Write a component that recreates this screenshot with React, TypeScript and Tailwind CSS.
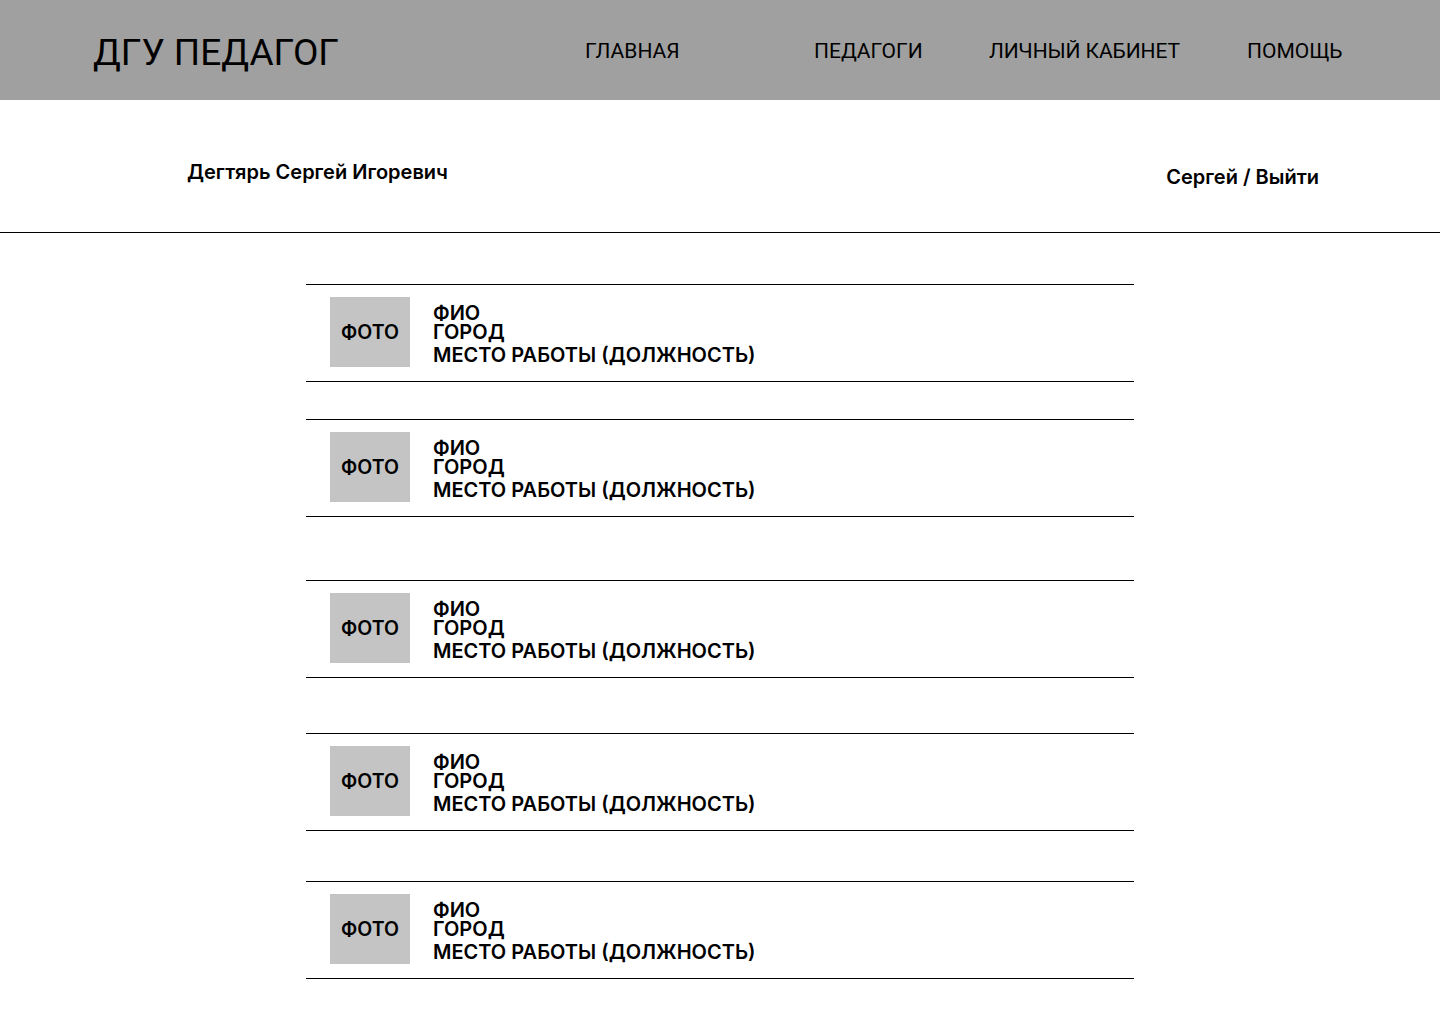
import React from "react";

const cards = [
  { mt: "mt-[51px]" },
  { mt: "mt-[37px]" },
  { mt: "mt-[63px]" },
  { mt: "mt-[55px]" },
  { mt: "mt-[50px]" },
];

export default function App() {
  return (
    <div className="min-h-[1024px] w-[1440px] bg-white text-black">
      <header className="flex h-[100px] items-center bg-[#a0a0a0]">
        <div className="ml-[93px] mt-[5px] w-[492px] font-['Roboto'] text-[37px] leading-none">ДГУ ПЕДАГОГ</div>
        <nav className="mt-[2px] flex items-center font-['Roboto'] text-[21px] leading-none">
          <span className="w-[229px]">ГЛАВНАЯ</span>
          <span className="w-[175px]">ПЕДАГОГИ</span>
          <span className="w-[258px] tracking-[-0.1px]">ЛИЧНЫЙ КАБИНЕТ</span>
          <span>ПОМОЩЬ</span>
        </nav>
      </header>
      <section className="flex h-[133px] items-start justify-between border-b border-black font-['Inter'] font-semibold">
        <div className="ml-[187px] mt-[61px] text-[20px] leading-[22px]">Дегтярь Сергей Игоревич</div>
        <div className="mr-[121px] mt-[66px] text-[20px] leading-[22px]">Сергей / Выйти</div>
      </section>
      <main className="ml-[306px] w-[828px] font-['Inter'] font-semibold">
        {cards.map((c, i) => (
          <div key={i} className={`${c.mt} flex h-[98px] border-y border-black pl-6 pt-3`}>
            <div className="flex h-[70px] w-[80px] items-center justify-center bg-[#c4c4c4] pt-[2px] text-[19.5px]">ФОТО</div>
            <div className="ml-[23px] pt-[7px] text-[20px]">
              <div className="leading-[19px]">ФИО</div>
              <div className="leading-[19px]">ГОРОД</div>
              <div className="mt-[2px] leading-[23px]">МЕСТО РАБОТЫ (ДОЛЖНОСТЬ)</div>
            </div>
          </div>
        ))}
      </main>
    </div>
  );
}
